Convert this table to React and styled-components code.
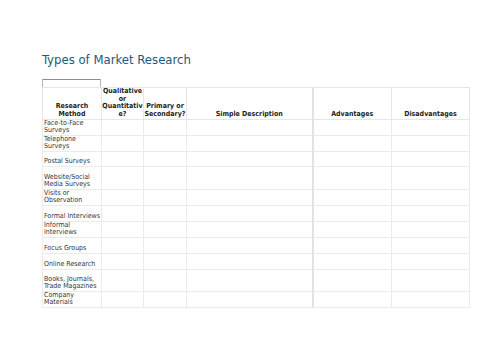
import styled, { createGlobalStyle } from "styled-components";

const GlobalStyle = createGlobalStyle`
  body {
    margin: 0;
    background: #fff;
    font-family: "DejaVu Sans Condensed", "DejaVu Sans", sans-serif;
    font-stretch: condensed;
  }
`;

const columns = [
  { label: "Research Method", width: 59 },
  { label: "Qualitative or Quantitative?", width: 42 },
  { label: "Primary or Secondary?", width: 43 },
  { label: "Simple Description", width: 126, thick: true },
  { label: "Advantages", width: 79 },
  { label: "Disadvantages", width: 78 },
];

const rows = [
  { name: "Face-to-Face Surveys", h: 16 },
  { name: "Telephone Surveys", h: 16 },
  { name: "Postal Surveys", h: 15 },
  { name: "Website/Social Media Surveys", h: 23 },
  { name: "Visits or Observation", h: 16 },
  { name: "Formal Interviews", h: 16 },
  { name: "Informal Interviews", h: 16 },
  { name: "Focus Groups", h: 16 },
  { name: "Online Research", h: 16 },
  { name: "Books, Journals, Trade Magazines", h: 22 },
  { name: "Company Materials", h: 16 },
];

function App() {
  return (
    <Page>
      <GlobalStyle />
      <Title>Types of Market Research</Title>
      <NameBox />
      <Sheet>
        <colgroup>
          {columns.map((c) => (
            <col key={c.label} style={{ width: c.width }} />
          ))}
        </colgroup>
        <thead>
          <HeadRow>
            {columns.map((c) => (
              <HeadCell key={c.label} $thick={c.thick}>
                {c.label === "Qualitative or Quantitative?" ? (
                  <>
                    Qualitative
                    <br />
                    or
                    <br />
                    Quantitativ
                    <br />
                    e?
                  </>
                ) : (
                  c.label
                )}
              </HeadCell>
            ))}
          </HeadRow>
        </thead>
        <tbody>
          {rows.map((r) => (
            <BodyRow key={r.name} $h={r.h}>
              <NameCell>{r.name}</NameCell>
              {columns.slice(1).map((c) => (
                <Cell key={c.label} $thick={c.thick} />
              ))}
            </BodyRow>
          ))}
        </tbody>
      </Sheet>
    </Page>
  );
}

export default App;

const Page = styled.div`
  padding: 52px 0 0 42px;
  width: 500px;
  height: 353px;
  box-sizing: border-box;
`;

const Title = styled.h1`
  margin: 0;
  font-size: 13px;
  font-weight: normal;
  line-height: 16px;
  color: #215a78;
`;

const NameBox = styled.div`
  margin-top: 11px;
  width: 59px;
  height: 8px;
  box-sizing: border-box;
  border: 1px solid #b4b4b4;
  border-top-color: #8c8c8c;
  border-bottom: none;
  border-radius: 1px 1px 0 0;
`;

const Sheet = styled.table`
  border-collapse: collapse;
  table-layout: fixed;
  width: 427px;
  font-size: 7px;
  line-height: 7px;
  color: #333;
`;

const HeadRow = styled.tr`
  height: 30px;
`;

const HeadCell = styled.th`
  border: 1px solid #e6e6e6;
  border-right: ${(p) => (p.$thick ? "2px solid #e2e2e2" : "1px solid #e6e6e6")};
  padding: 0 0 1px;
  vertical-align: bottom;
  text-align: center;
  font-weight: bold;
  line-height: 7.5px;
  color: #222;
  overflow: hidden;
`;

const BodyRow = styled.tr`
  height: ${(p) => p.$h}px;
`;

const Cell = styled.td`
  border: 1px solid #ebebeb;
  border-right: ${(p) => (p.$thick ? "2px solid #e2e2e2" : "1px solid #ebebeb")};
  padding: 0;
`;

const NameCell = styled.td`
  border: 1px solid #ebebeb;
  padding: 0 0 1px 1px;
  vertical-align: bottom;
  text-align: left;
`;
